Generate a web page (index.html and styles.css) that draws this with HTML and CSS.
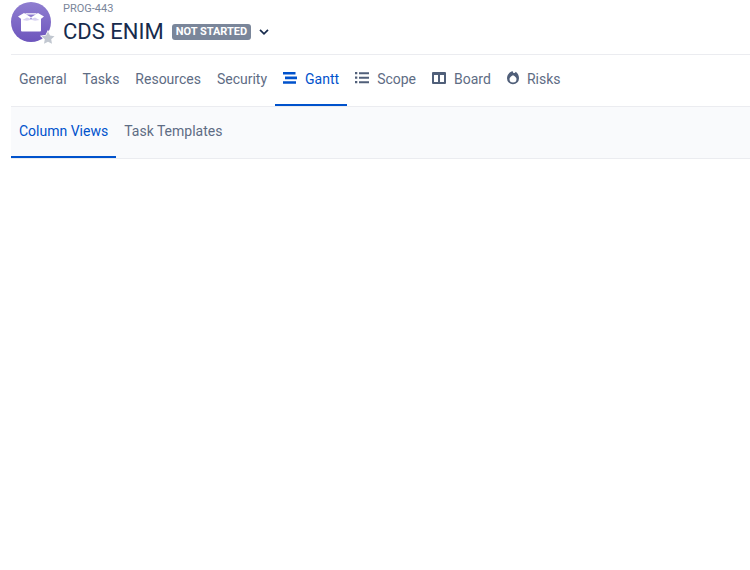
FILE: index.html
```html
<!DOCTYPE html>
<html lang="en">
<head>
<meta charset="utf-8">
<title>CDS ENIM</title>
<link rel="stylesheet" href="styles.css">
</head>
<body>
<div class="page">
  <header class="head">
    <div class="avatar">
      <svg class="avatar-art" width="40" height="40" viewBox="0 0 40 40">
        <defs><linearGradient id="g" x1="0" y1="0" x2="0" y2="1"><stop offset="0" stop-color="#8f7ed0"/><stop offset="1" stop-color="#6d55bd"/></linearGradient></defs>
        <circle cx="20" cy="20" r="20" fill="url(#g)"/>
        <path d="M10 16H30V28.500A1 1 0 0 1 29 29.500H11A1 1 0 0 1 10 28.500Z" fill="#fff"/>
        <path d="M7 14.500 13 11 20 15 27 11 33 14.500 28.500 18 20 16 11.500 18Z" fill="#fff"/>
        <path d="M14.500 11.300H25.500V12L20 15 14.500 12Z" fill="#fff"/>
        <path d="M15.500 12.600H24.500L20 15.200 21.500 17.500H18.500L20 15.200Z" fill="#8d7bcf"/>
        <path d="M11.500 18 16 15.500 20 17 24 15.500 28.500 18 24 18.800 20 17.800 16 18.800Z" fill="#d8d2f1"/>
      </svg>
      <svg class="star" width="14" height="14" viewBox="0 0 14 14"><path class="star-shape" d="M7 .5 9 4.500 13.500 5.200 10.200 8.300 11 12.800 7 10.700 3 12.800 3.800 8.300.5 5.200 5 4.500Z"/></svg>
    </div>
    <div class="titles">
      <div class="key">PROG-443</div>
      <div class="title-row">
        <h1 class="name">CDS ENIM</h1>
        <span class="badge">NOT STARTED</span>
        <svg class="chev" width="12" height="8" viewBox="0 0 12 8"><path d="M2 1.800 6 5.800 10 1.800" fill="none" stroke="#172b4d" stroke-width="1.700"/></svg>
      </div>
    </div>
  </header>
  <nav class="tabs">
    <a class="tab">General</a>
    <a class="tab">Tasks</a>
    <a class="tab">Resources</a>
    <a class="tab">Security</a>
    <a class="tab active">
      <svg class="ico" width="14" height="14" viewBox="0 0 14 14"><path d="M0 1h12.500v2.600H0ZM2 5.600h12v2.600H2ZM0 10.200h13V12.800H0Z" fill="#0052cc"/></svg>Gantt</a>
    <a class="tab">
      <svg class="ico" width="14" height="14" viewBox="0 0 14 14" fill="#505f79"><path d="M0 1h2.300v2.300H0ZM0 5.500h2.300v2.300H0ZM0 10h2.300v2.300H0ZM4 1.200h10v2H4ZM4 5.700h10v2H4ZM4 10.200h10v2H4Z"/></svg>Scope</a>
    <a class="tab">
      <svg class="ico" width="14" height="14" viewBox="0 0 14 14"><path d="M0 2a1 1 0 0 1 1-1h12a1 1 0 0 1 1 1v10a1 1 0 0 1-1 1H1a1 1 0 0 1-1-1ZM2 4v7h4V4ZM8 4v7h4V4Z" fill="#505f79" fill-rule="evenodd"/></svg>Board</a>
    <a class="tab">
      <svg class="ico" width="12" height="14" viewBox="0 0 12 14"><path d="M5.500 0c.3 1.400 1 2.200 2 2 .6-.1 1-.6 1.200-1.200C10.800 2.300 12 4.600 12 7.300a6 6 0 0 1-12 0C0 4 2 1.500 5.500 0ZM6 4.200C4 5.200 2.500 6.300 2.500 8a3.500 3.500 0 0 0 7 0C9.500 6.400 8 5.200 6 4.200Z" fill="#505f79" fill-rule="evenodd"/></svg>Risks</a>
  </nav>
  <nav class="subtabs">
    <a class="subtab active">Column Views</a>
    <a class="subtab">Task Templates</a>
  </nav>
</div>
</body>
</html>
```
FILE: styles.css
```css
html, body {
  margin: 0;
  padding: 0;
  background: #fff;
}
body {
  font-family: Roboto, "Liberation Sans", sans-serif;
  color: #5e6c84;
  width: 750px;
  height: 570px;
  overflow: hidden;
}
.page {
  margin-left: 11px;
}
.head {
  display: flex;
  gap: 12px;
  height: 55px;
  padding-top: 2px;
  box-sizing: border-box;
  border-bottom: 1px solid #ebecf0;
}
.avatar {
  position: relative;
  width: 40px;
  height: 40px;
}
.avatar-art {
  display: block;
}
.star {
  position: absolute;
  left: 30px;
  top: 29px;
  overflow: visible;
}
.star-shape {
  fill: #c1c7d0;
  stroke: #fff;
  stroke-width: 1.500;
  paint-order: stroke;
}
.titles {
  display: flex;
  flex-direction: column;
}
.key {
  font-size: 11px;
  line-height: 13px;
  color: #7a869a;
}
.title-row {
  display: flex;
  align-items: center;
  height: 26px;
  margin-top: 4px;
}
.name {
  margin: 0;
  font-size: 22px;
  font-weight: 400;
  line-height: 26px;
  color: #172b4d;
}
.badge {
  margin-left: 8px;
  padding: 0 4px;
  height: 16px;
  line-height: 16px;
  border-radius: 3px;
  background: #7a869a;
  color: #fff;
  font-size: 11px;
  font-weight: 700;
}
.chev {
  margin-left: 7px;
}
.tabs {
  display: flex;
  height: 51px;
  border-bottom: 1px solid #ebecf0;
}
.tab {
  display: flex;
  align-items: center;
  gap: 8px;
  padding: 0 8px 2px;
  font-size: 14px;
  border-bottom: 2px solid transparent;
  box-sizing: border-box;
  height: 51px;
}
.tab.active {
  color: #0052cc;
  border-bottom-color: #0052cc;
}
.ico {
  display: block;
  margin-top: -1px;
}
.subtabs {
  display: flex;
  height: 51px;
  background: #f9fafc;
  border-bottom: 1px solid #ebecf0;
}
.subtab {
  display: flex;
  align-items: center;
  padding: 0 8px 1px;
  font-size: 14px;
  height: 51px;
  box-sizing: border-box;
  border-bottom: 2px solid transparent;
}
.subtab.active {
  color: #0052cc;
  border-bottom-color: #0052cc;
}
```
